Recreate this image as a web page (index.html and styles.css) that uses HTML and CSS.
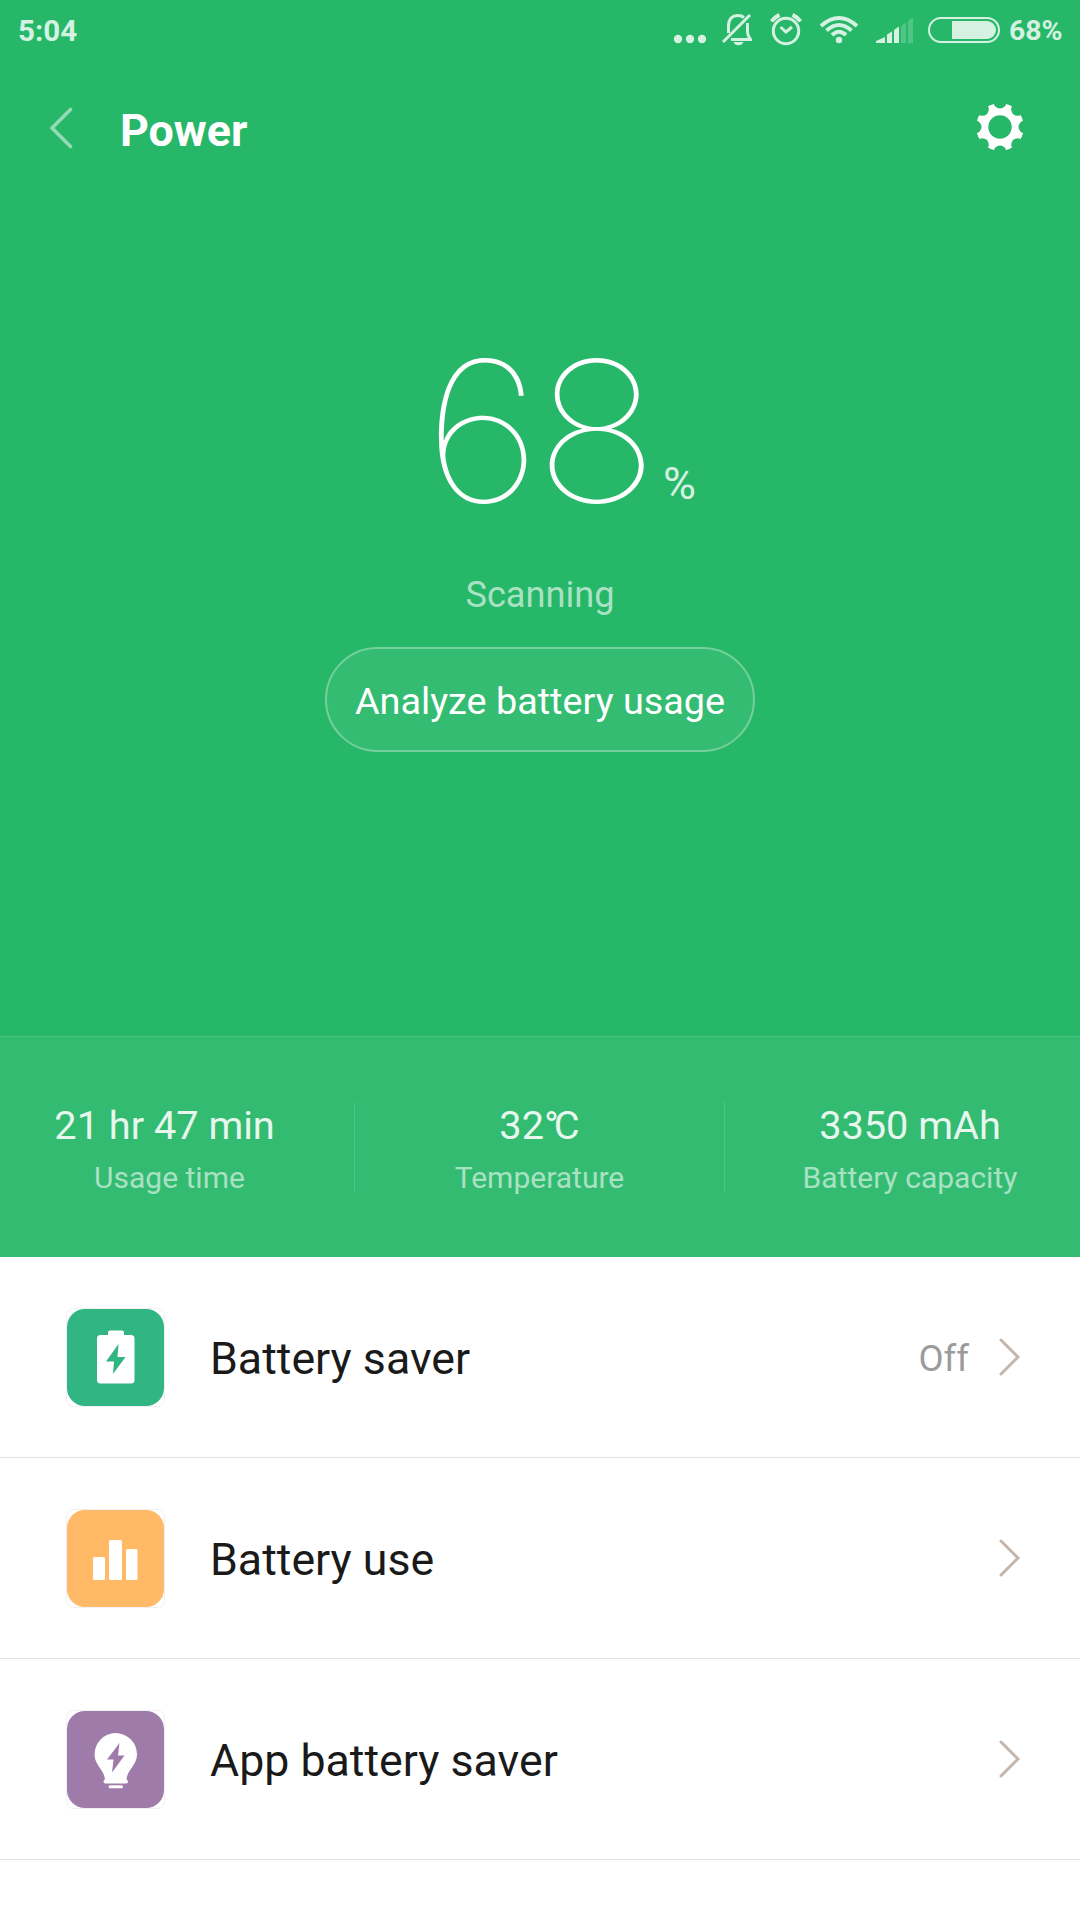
FILE: index.html
```html
<!DOCTYPE html>
<html lang="en">
    <head>
        <meta charset="utf-8">
        <meta name="viewport" content="width=device-width, initial-scale=1.0">
        <title>Power</title>
        <link rel="stylesheet" href="styles.css">
    </head>
    <body>
        <div class="top">
            <div class="status">
                <span class="time">5:04</span>
                <svg class="dots" width="32" height="60" viewBox="674 0 32 60">
                    <circle cx="678" cy="39" r="4.2"/>
                    <circle cx="690" cy="39" r="4.2"/>
                    <circle cx="702" cy="39" r="4.2"/>
                </svg>
                <svg class="bell" width="30" height="60" viewBox="722 0 30 60">
                    <path class="line" d="M728.5 33V26C728.5 19 732.5 15.5 738 15.5C740.500 15.500 742.500 16.200 744 17.500M747.500 23V32C747.500 35 748.500 37 750.500 39.500H731"/>
                    <path class="line" d="M723 42L750 15"/>
                    <path d="M733.500 42H743.500C742.500 44.300 741 45.300 738.500 45.300C736 45.300 734.500 44.300 733.500 42Z"/>
                </svg>
                <svg class="alarm" width="32" height="60" viewBox="770 0 32 60">
                    <circle class="line" cx="786" cy="31" r="12.700"/>
                    <path class="line" d="M780.500 27L786 32L792 27"/>
                    <path class="line thick" d="M771.500 21.500Q774.500 17 779.500 14.800M792.500 14.800Q797.500 17 800.500 21.500"/>
                </svg>
                <svg class="wifi" width="38" height="60" viewBox="820 0 38 60">
                    <circle cx="839" cy="40" r="3.200"/>
                    <path class="line thick" d="M832 35Q839 28.500 846 35M826.500 30.500Q839 19.500 851.500 30.500M821 26Q839 10 857 26"/>
                </svg>
                <svg class="signal" width="38" height="60" viewBox="876 0 38 60">
                    <path d="M876 43V41L885 37V43ZM887 43V34.500L892 31.500V43ZM894 43V30L899 26.500V43Z"/>
                    <path class="dim" d="M901 43V26L906 22.500V43ZM908 43V21L913 17.500V43Z"/>
                </svg>
                <svg class="batt" width="72" height="60" viewBox="928 0 72 60">
                    <rect class="line thin" x="929" y="18" width="70" height="24" rx="12"/>
                    <path d="M952 21H987A9 9 0 0 1 987 39H952Z"/>
                </svg>
                <span class="pct">68%</span>
            </div>
            <div class="nav">
                <svg class="back" width="24" height="42" viewBox="0 0 24 42">
                    <path d="M21.500 2.500L3 21L21.500 39.500"/>
                </svg>
                <h1>Power</h1>
                <svg class="gear" width="48" height="48" viewBox="-24 -24 48 48">
                    <mask id="teeth">
                        <circle r="24" fill="#fff"/>
                        <circle r="11.700"/>
                        <circle cx="25" r="6.500"/>
                        <circle cx="25" r="6.500" transform="rotate(45)"/>
                        <circle cx="25" r="6.500" transform="rotate(90)"/>
                        <circle cx="25" r="6.500" transform="rotate(135)"/>
                        <circle cx="25" r="6.500" transform="rotate(180)"/>
                        <circle cx="25" r="6.500" transform="rotate(225)"/>
                        <circle cx="25" r="6.500" transform="rotate(270)"/>
                        <circle cx="25" r="6.500" transform="rotate(315)"/>
                    </mask>
                    <circle r="24" fill="#fff" mask="url(#teeth)"/>
                </svg>
            </div>
            <div class="level">
                <span class="big">68</span><span class="unit">%</span>
            </div>
            <p class="scan">Scanning</p>
            <button class="analyze">Analyze battery usage</button>
        </div>
        <div class="stats">
            <div class="stat">
                <p class="value">21 hr 47 min&nbsp;</p>
                <p class="label">Usage time</p>
            </div>
            <div class="stat">
                <p class="value">32<span class="deg">°</span>C</p>
                <p class="label">Temperature</p>
            </div>
            <div class="stat">
                <p class="value">3350 mAh</p>
                <p class="label">Battery capacity</p>
            </div>
        </div>
        <div class="list">
            <div class="row">
                <svg class="icon" width="99" height="99" viewBox="0 0 99 99">
                    <rect class="frame" x=".5" y=".5" width="98" height="98" rx="7"/>
                    <rect x="1" y="1" width="97" height="97" rx="18" fill="#31b583"/>
                    <path fill="#fff" d="M42 27V24.500Q42 22.500 44 22.500H56Q58 22.500 58 24.500V27H65Q68.500 27 68.500 30.500V72Q68.500 75.500 65 75.500H34.500Q31 75.500 31 72V30.500Q31 27 34.500 27Z"/>
                    <path fill="#31b583" d="M52.500 36L40 53.500H48L47 66L59.500 49H51.500Z"/>
                </svg>
                <span class="name">Battery saver</span>
                <span class="state">Off</span>
                <svg class="arrow" width="22" height="38" viewBox="0 0 22 38"><path d="M2 2L19 19L2 36"/></svg>
            </div>
            <div class="row">
                <svg class="icon" width="99" height="99" viewBox="0 0 99 99">
                    <rect class="frame" x=".5" y=".5" width="98" height="98" rx="7"/>
                    <rect x="1" y="1" width="97" height="97" rx="18" fill="#ffb967"/>
                    <g fill="#fff">
                        <rect x="27" y="48" width="12" height="23" rx="1.500"/>
                        <rect x="43" y="31" width="13" height="40" rx="1.500"/>
                        <rect x="60" y="40" width="11.500" height="31" rx="1.500"/>
                    </g>
                </svg>
                <span class="name">Battery use</span>
                <svg class="arrow" width="22" height="38" viewBox="0 0 22 38"><path d="M2 2L19 19L2 36"/></svg>
            </div>
            <div class="row">
                <svg class="icon" width="99" height="99" viewBox="0 0 99 99">
                    <rect class="frame" x=".5" y=".5" width="98" height="98" rx="7"/>
                    <rect x="1" y="1" width="97" height="97" rx="18" fill="#9f7ba9"/>
                    <path fill="#fff" d="M49.500 23A21.500 21.500 0 0 1 71 44.500C71 55 61 60 60.500 69.500Q62 70 62 71.700Q62 73.500 60 73.500H39.500Q37.500 73.500 37.500 71.700Q37.500 70 39 69.500C38.500 60 28.500 55 28.500 44.500A21.500 21.500 0 0 1 49.500 23Z"/>
                    <rect x="42.500" y="75.200" width="14.500" height="3" rx="1.500" fill="#fff"/>
                    <path fill="#9f7ba9" d="M53.500 33L41 49.500H47.500L46 62.500L58.500 45.500H52Z"/>
                </svg>
                <span class="name">App battery saver</span>
                <svg class="arrow" width="22" height="38" viewBox="0 0 22 38"><path d="M2 2L19 19L2 36"/></svg>
            </div>
        </div>
    </body>
</html>
```
FILE: styles.css
```css
* {
    box-sizing: border-box;
}
body {
    margin: 0;
    height: 1920px;
    overflow: hidden;
    background-color: white;
    font-family: Roboto, "Liberation Sans", sans-serif;
}
h1, p {
    margin: 0;
    font-weight: normal;
}
svg {
    display: block;
    flex: none;
}
.top {
    height: 1036px;
    background-color: #27b768;
    color: white;
    display: flex;
    flex-direction: column;
    align-items: center;
}
.status {
    width: 100%;
    height: 60px;
    display: flex;
    align-items: center;
    padding: 0 18px;
    color: #d4f1e1;
    fill: #d4f1e1;
    font-weight: bold;
}
.time {
    font-size: 29.5px;
    line-height: 60px;
    padding-top: 1px;
}
.pct {
    width: 53px;
    font-size: 28.4px;
    line-height: 60px;
    padding-top: 1px;
    margin-left: 9px;
}
.line {
    fill: none;
    stroke: #d4f1e1;
    stroke-width: 3;
}
.thick {
    stroke-width: 4;
}
.thin {
    stroke-width: 2;
}
.dim {
    fill: #50c686;
}
.dots {
    margin-left: auto;
}
.bell {
    margin-left: 16px;
}
.alarm {
    margin-left: 18px;
}
.wifi {
    margin-left: 18px;
}
.signal {
    margin-left: 18px;
}
.batt {
    margin-left: 14px;
}
.nav {
    width: 100%;
    height: 136px;
    padding: 0 56px 0 49px;
    display: flex;
    align-items: center;
}
.back path {
    fill: none;
    stroke: #93dbb4;
    stroke-width: 3.6;
    stroke-linecap: round;
    stroke-linejoin: round;
}
.nav h1 {
    font-size: 44.8px;
    font-weight: bold;
    margin-left: 47px;
    padding-top: 4px;
}
.gear {
    margin-left: auto;
    margin-bottom: 2px;
}
.level {
    height: 200px;
    margin-top: 135px;
    margin-left: 424px;
    align-self: flex-start;
    display: flex;
    align-items: flex-start;
}
.big {
    width: 239px;
    font-family: Inter, sans-serif;
    font-weight: 100;
    font-size: 195px;
    line-height: 200px;
    letter-spacing: -6px;
    transform: scaleX(1.065);
    transform-origin: left;
}
.unit {
    font-size: 45px;
    line-height: 46px;
    color: #d4f1e1;
    margin-top: 130px;
}
.scan {
    font-size: 36.2px;
    line-height: 42px;
    margin-top: 43px;
    color: #a8e2c3;
}
.analyze {
    width: 430px;
    height: 105px;
    margin-top: 31px;
    border: 2px solid #74d09d;
    border-radius: 53px;
    background-color: #35bc73;
    color: white;
    font-family: inherit;
    font-size: 37.8px;
    padding: 2px 0 0;
}
.stats {
    height: 221px;
    background-color: #33bb72;
    border-top: 1px solid #4ac283;
    display: flex;
    justify-content: center;
    padding-top: 65px;
}
.stat {
    flex: none;
    width: 370px;
    height: 90px;
    text-align: center;
    color: #e7f7ee;
    border-right: 1px solid #4ec386;
}
.stat:last-child {
    border: none;
}
.value {
    font-size: 39.7px;
    line-height: 47px;
}
.deg {
    letter-spacing: -5px;
}
.label {
    font-size: 30px;
    line-height: 36px;
    margin-top: 11px;
    color: #a9e1c3;
}
.row {
    height: 201px;
    padding: 0 59px 0 65.5px;
    border-bottom: 1px solid #e2e2e2;
    display: flex;
    align-items: center;
}
.frame {
    fill: white;
    stroke: #f0f0f0;
}
.name {
    font-size: 44.7px;
    color: #1a1a1a;
    margin-left: 45.5px;
    margin-right: auto;
    padding-top: 4px;
}
.state {
    font-size: 36.5px;
    color: #9b9b9b;
    margin-right: 30px;
    padding-top: 2px;
}
.arrow path {
    fill: none;
    stroke: #c4b5ab;
    stroke-width: 3;
    stroke-linecap: round;
}
```
